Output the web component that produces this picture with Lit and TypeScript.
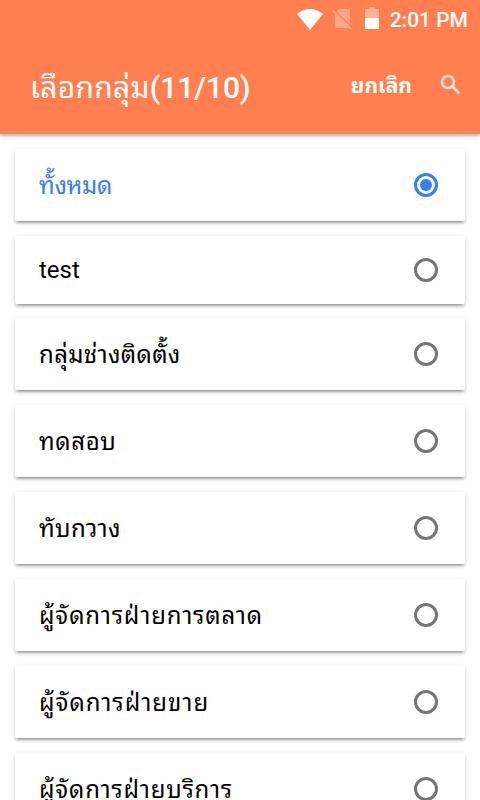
import { LitElement, html, css } from "lit";
import { customElement, state } from "lit/decorators.js";
import { classMap } from "lit/directives/class-map.js";
import { styleMap } from "lit/directives/style-map.js";

interface Group {
  name: string;
  tracking: number;
}

@customElement("app-root")
export class AppRoot extends LitElement {
  static styles = css`
    :host { display: block; height: 800px; overflow: hidden; background: #fff;
      font-family: Roboto, "Noto Sans Thai Looped", "Noto Sans", sans-serif; color: #000; }
    .top { height: 134px; background: #ff7f50; color: #fff; box-shadow: 0 2px 2px rgba(0,0,0,.16), 0 2px 6px rgba(0,0,0,.16); display: flex; flex-direction: column; }
    .status { height: 38px; display: flex; justify-content: flex-end; align-items: center; padding-right: 12px; font-size: 21px; font-weight: 500; }
    .status svg { display: block; }
    .time { padding-top: 2px; }
    .wifi { margin-right: 9px; }
    .sim { margin: 1px 13px 0 0; }
    .battery { margin: 0 11px 2px 0; }
    .bar { flex: 1; display: flex; align-items: center; padding: 4px 19px 0 30px; }
    .title { flex: 1; font-size: 30px; font-weight: 500; white-space: nowrap; padding-bottom: 7px; }
    .thin { font-weight: 400; letter-spacing: .25px; }
    .cancel { font-size: 21px; font-weight: 700; margin-right: 28px; white-space: nowrap; padding-bottom: 10px; }
    .search { margin-top: -7px; }
    .list { padding: 15px 15px 0; }
    .card { height: 72px; margin-bottom: 15px; box-sizing: border-box; padding: 0 27px 0 24px; display: flex; align-items: center; justify-content: space-between;
      border-radius: 2px; background: #fff; font-size: 24px; white-space: nowrap;
      box-shadow: 0 3px 3px rgba(0,0,0,.14), 0 4px 2px -3px rgba(0,0,0,.3), 0 1px 5px rgba(0,0,0,.12); }
    .name { padding-bottom: 4px; }
    .latin { height: 68px; margin-bottom: 14px; }
    .latin .name { padding-bottom: 0; }
    .on { color: #387ef5; }
    .radio { width: 24px; height: 24px; box-sizing: border-box; border: 3px solid #757575; border-radius: 50%; display: grid; place-items: center; }
    .on .radio { border-color: #387ef5; }
    .on .radio::after { content: ""; width: 12px; height: 12px; border-radius: 50%; background: #387ef5; }
  `;
  @state() groups: Group[] = [
    { name: "ทั้งหมด", tracking: -0.3 },
    { name: "test", tracking: 0 },
    { name: "กลุ่มช่างติดตั้ง", tracking: 0.35 },
    { name: "ทดสอบ", tracking: 0.6 },
    { name: "ทับกวาง", tracking: 0.4 },
    { name: "ผู้จัดการฝ่ายการตลาด", tracking: 0.87 },
    { name: "ผู้จัดการฝ่ายขาย", tracking: 1 },
    { name: "ผู้จัดการฝ่ายบริการ", tracking: 0.8 },
  ];
  render() {
    return html`
      <header class="top">
        <div class="status">
          <svg class="wifi" width="26" height="21" viewBox="0 0 26 21"><path fill="#fff" d="M0 4.800Q13-4.800 26 4.800L13 21Z"/></svg>
          <svg class="sim" width="20" height="21" viewBox="0 0 20 21"><path fill="#ffa588" d="M7 0h9.500q1.500 0 1.500 1.500v14L4.500 2.500zM3 4.500L17 18.500q0 .5-1 .5H4.500Q3 19 3 17.500z"/><path stroke="#ffa588" stroke-width="1.700" d="M.6 1.400l18.500 18.500"/></svg>
          <svg class="battery" width="14" height="22" viewBox="0 0 14 22"><path fill="#ffb296" d="M0 3Q0 2 1 2H4.500V0h5v2H13q1 0 1 1v8H0z"/><path fill="#fff" d="M0 11h14v10q0 1-1 1H1q-1 0-1-1z"/></svg>
          <span class="time">2:01 PM</span>
        </div>
        <div class="bar">
          <span class="title"><span class="thin">เลือกกลุ่ม</span>(11/10)</span>
          <span class="cancel">ยกเลิก</span>
          <svg class="search" width="21" height="21" viewBox="0 0 21 21" fill="none" stroke="#ffe5dc" stroke-width="2.500"><circle cx="8" cy="8" r="6"/><path d="M12.500 12.500l7 7"/></svg>
        </div>
      </header>
      <main class="list">
        ${this.groups.map((g, i) => html`<div class=${classMap({ card: true, on: i === 0, latin: i === 1 })}><span class="name" style=${styleMap({ letterSpacing: `${g.tracking}px` })}>${g.name}</span><span class="radio"></span></div>`)}
      </main>`;
  }
}
